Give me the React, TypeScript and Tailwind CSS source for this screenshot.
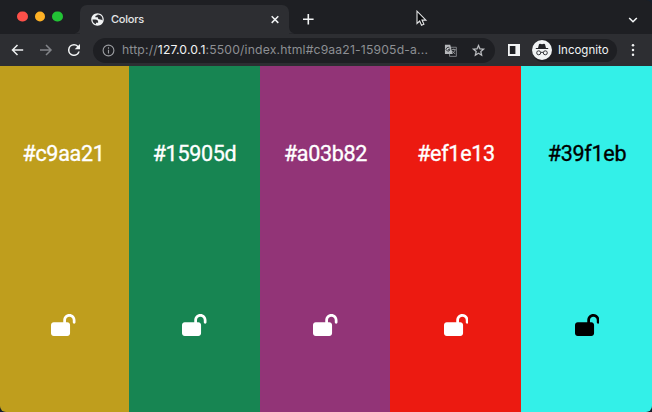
type Swatch = { hex: string; className: string };

const swatches: Swatch[] = [
  { hex: '#c9aa21', className: 'w-[129px] bg-[#bf9e1d] text-white pr-[2px]' },
  { hex: '#15905d', className: 'w-[131px] bg-[#178552] text-white' },
  { hex: '#a03b82', className: 'w-[130px] bg-[#923477] text-white pl-px' },
  { hex: '#ef1e13', className: 'w-[131px] bg-[#ec1a11] text-white pl-px' },
  { hex: '#39f1eb', className: 'w-[131px] bg-[#33f0e8] text-black pl-px' },
];

function LockOpen() {
  return (
    <svg viewBox="0 0 576 512" className="h-[22px] w-[24.5px]" fill="currentColor">
      <path d="M352 144c0-44.2 35.8-80 80-80s80 35.8 80 80v48c0 17.7 14.3 32 32 32s32-14.3 32-32V144C576 64.5 511.5 0 432 0S288 64.5 288 144v48H64c-35.3 0-64 28.7-64 64V448c0 35.3 28.7 64 64 64H384c35.3 0 64-28.7 64-64V256c0-35.3-28.7-64-64-64H352V144z" />
    </svg>
  );
}

function Globe() {
  return (
    <svg viewBox="0 0 24 24" className="h-[15px] w-[15px]" fill="#f1f3f4">
      <path d="M12 2C6.48 2 2 6.48 2 12s4.48 10 10 10 10-4.48 10-10S17.52 2 12 2zM4 12h4.4c3.4.02 4.95 1.73 4.64 5.13H9.5v2.47A8 8 0 0 1 4 12zm16 0c0 .53-.05 1.04-.15 1.54-.6-1-1.73-1.54-3.41-1.54-2.6 0-3.92-1.2-3.92-3.6H8.6c-.3-2.1.7-3.3 3.1-3.4 0-.6.3-.9.9-1A8 8 0 0 1 20 12z" />
    </svg>
  );
}

function TabStrip() {
  return (
    <div className="flex h-[34px] items-end bg-[#1e1f23]">
      <div className="flex h-[34px] w-[73px] items-center gap-[7px] pl-[17px]">
        <span className="h-[10.5px] w-[10.5px] -translate-y-[0.5px] rounded-full bg-[#fd5049]" />
        <span className="h-[10.5px] w-[10.5px] -translate-y-[0.5px] rounded-full bg-[#feb125]" />
        <span className="h-[10.5px] w-[10.5px] -translate-y-[0.5px] rounded-full bg-[#22c335]" />
      </div>
      <svg viewBox="0 0 8 8" className="h-[8px] w-[7px]" fill="#2d2e32"><path d="M8 0v8H0c5 0 8-3 8-8z" /></svg>
      <div className="flex h-[29px] w-[209px] items-center rounded-t-[7px] bg-[#2d2e32] pl-[10px] pr-[9px]">
        <Globe />
        <span className="ml-[6px] text-[11px] font-medium leading-none tracking-[-0.25px] text-[#e4e5e7]">Colors</span>
        <svg viewBox="0 0 10 10" className="ml-auto h-[10px] w-[10px]" stroke="#f1f3f4" strokeWidth="1.5"><path d="M1.7 1.3l6.6 6.6M8.3 1.3L1.7 7.9" /></svg>
      </div>
      <svg viewBox="0 0 8 8" className="h-[8px] w-[7px]" fill="#2d2e32"><path d="M0 0v8h8C3 8 0 5 0 0z" /></svg>
      <svg viewBox="0 0 12 12" className="mb-[9px] ml-[6px] h-[12px] w-[12px]" stroke="#f1f3f4" strokeWidth="1.6"><path d="M6.3 1v10.6M1 6.3h10.6" /></svg>
      <svg viewBox="0 0 12 18" className="mb-[6px] ml-[102px] h-[18px] w-[12px]" fill="#08090b" stroke="#e3e4e6" strokeWidth="1.1">
        <path d="M1 1.2v12.3l2.7-2.5 1.8 4.2 2.4-1L6 10.1h3.9z" />
      </svg>
      <svg viewBox="0 0 10 8" className="mb-[10px] ml-auto mr-[14px] h-[8px] w-[10px]" fill="none" stroke="#f1f3f4" strokeWidth="1.6"><path d="M1.2 2l3.8 3.7L8.8 2" /></svg>
    </div>
  );
}

function Toolbar() {
  return (
    <div className="flex h-[32px] items-center bg-[#2d2e32]">
      <svg viewBox="0 0 14 14" className="ml-[11px] h-[14px] w-[14px]" fill="none" stroke="#eef0f1" strokeWidth="1.5"><path d="M12.2 7H1.5M6.5 2L1.5 7l5 5" /></svg>
      <svg viewBox="0 0 14 14" className="ml-[14px] h-[14px] w-[14px]" fill="none" stroke="#828489" strokeWidth="1.5"><path d="M1 7h10.9M7 2l5 5-5 5" /></svg>
      <svg viewBox="4 4 16 16" className="ml-[15px] h-[12px] w-[12px]" fill="#f1f3f4"><path d="M17.65 6.35A7.96 7.96 0 0 0 12 4a8 8 0 1 0 7.73 10h-2.08A6 6 0 1 1 12 6c1.66 0 3.14.69 4.22 1.78L13 11h7V4l-2.35 2.35z" /></svg>
      <div className="ml-[13px] flex h-[25px] w-[402px] items-center rounded-full bg-[#1e1f23] pl-[9px]">
        <svg viewBox="0 0 14 14" className="h-[13px] w-[13px]" fill="none" stroke="#9a9ca0" strokeWidth="1.2"><circle cx="7" cy="7" r="5.8" /><path d="M7 6.2v4M7 3.6v1.4" /></svg>
        <span className="ml-[7px] w-[310px] whitespace-nowrap text-[12.2px] leading-none tracking-[0.16px] text-[#8d8f93]">
          http://<span className="text-[#f2f3f4]">127.0.0.1</span>:5500/index.html#c9aa21-15905d-a...
        </span>
        <svg viewBox="0 0 14 14" className="ml-[12px] h-[13px] w-[13px]">
          <path d="M6 3.5h7.3v9.8H6z" fill="none" stroke="#85878b" strokeWidth="1" />
          <path d="M1 .8h5.7l2.6 10H1z" fill="#b6b8bb" />
          <path d="M6 4.5A2 2 0 1 0 6.3 6H4.4" fill="none" stroke="#303136" strokeWidth="1" />
          <path d="M8.5 6h4M10.5 5v1M12 6c-.4 2-1.4 3-3 4M9 7.5c.6 1.3 1.6 2.3 3 3" fill="none" stroke="#a2a4a7" strokeWidth=".9" />
        </svg>
        <svg viewBox="0 0 24 24" className="ml-[14px] h-[15px] w-[15px]" fill="#c5c7ca" stroke="#c5c7ca" strokeWidth=".4"><path d="M22 9.24l-7.19-.62L12 2 9.19 8.63 2 9.24l5.46 4.73L5.82 21 12 17.27 18.18 21l-1.63-7.03L22 9.24zM12 15.4l-3.76 2.27 1-4.28-3.32-2.88 4.38-.38L12 6.1l1.71 4.04 4.38.38-3.32 2.88 1 4.28L12 15.4z" /></svg>
      </div>
      <svg viewBox="0 0 12 12" className="ml-[13px] h-[12px] w-[12px]"><path d="M0 0h12v12H0z" fill="#f1f3f4" /><path d="M1.8 2h5.6v8H1.8z" fill="#1f2024" /></svg>
      <div className="ml-[12px] flex h-[23px] w-[85px] items-center rounded-full bg-[#1e1f23]">
        <svg viewBox="0 0 20 20" className="h-[20px] w-[20px]">
          <circle cx="10" cy="10" r="10" fill="#f1f3f4" />
          <path d="M7 4.2l1-.4 2 .5 2-.5 1 .4 1 3.7H6z" fill="#232428" />
          <path d="M3.8 8.5h12.4" stroke="#232428" strokeWidth="1.1" />
          <g fill="none" stroke="#34353a" strokeWidth="1"><circle cx="6.7" cy="12.8" r="2" /><circle cx="13.3" cy="12.8" r="2" /><path d="M8.7 12.6q1.3-.8 2.6 0" /></g>
        </svg>
        <span className="ml-[6px] pt-px text-[11.5px] leading-none text-[#f1f3f4]">Incognito</span>
      </div>
      <svg viewBox="0 0 4 14" className="ml-[14px] h-[14px] w-[4px]" fill="#f1f3f4"><circle cx="2" cy="2.3" r="1.25" /><circle cx="2" cy="7" r="1.25" /><circle cx="2" cy="11.7" r="1.25" /></svg>
    </div>
  );
}

export default function App() {
  return (
    <div className="h-[412px] w-[652px] overflow-hidden bg-[#17202c] font-['Inter',sans-serif]">
      <div className="flex h-full flex-col overflow-hidden rounded-tr-[6px] rounded-b-[6px]">
        <TabStrip />
        <Toolbar />
        <main className="flex flex-1 font-['Roboto',sans-serif]">
          {swatches.map(({ hex, className }) => (
            <section key={hex} className={`flex shrink-0 flex-col items-center ${className}`}>
              <h2 className="mt-[75px] text-[21.5px] font-normal leading-[26px] tracking-[-0.3px] [-webkit-text-stroke:0.35px_currentColor]">{hex}</h2>
              <button className="mt-[147px]" aria-label="Lock color"><LockOpen /></button>
            </section>
          ))}
        </main>
      </div>
    </div>
  );
}
